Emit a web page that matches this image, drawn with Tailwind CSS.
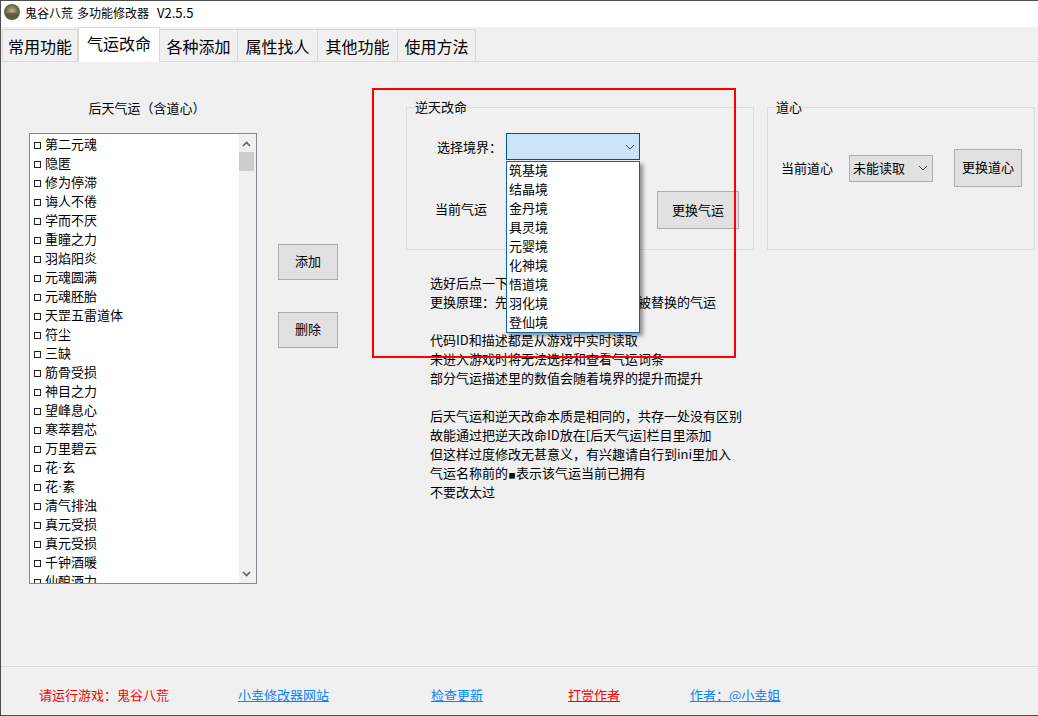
<!DOCTYPE html>
<html lang="zh-CN">
<head>
  <meta charset="UTF-8" />
  <title>鬼谷八荒 多功能修改器 V2.5.5</title>
  <script src="https://cdn.jsdelivr.net/npm/@tailwindcss/browser@4"></script>
</head>
<body class="bg-[#f0f0f0] text-black overflow-hidden">
  <div class="relative w-[1038px] h-[716px] flex flex-col border-l border-t border-b border-[#4d4d4d] bg-[#f0f0f0] text-[13px] leading-[19px] font-['Noto_Sans_CJK_SC',sans-serif]">

    <!-- 标题栏 -->
    <div class="h-[26px] bg-white flex items-center pl-[3px] shrink-0">
      <svg width="16" height="16" viewBox="0 0 16 16" class="mt-[-4px]">
        <defs>
          <radialGradient id="orb" cx="50%" cy="45%" r="55%">
            <stop offset="0%" stop-color="#c9b98f" />
            <stop offset="55%" stop-color="#7d7754" />
            <stop offset="100%" stop-color="#3f5a4c" />
          </radialGradient>
        </defs>
        <circle cx="8" cy="8" r="8" fill="url(#orb)" />
        <path d="M2 10 C5 8 10 8 14 10 L13 12 C10 14 5 14 3 12 Z" fill="#4a4630" opacity="0.6" />
      </svg>
      <span class="ml-[5px] text-[12px] mt-[-4px]">鬼谷八荒</span>
      <span class="ml-[4px] text-[12px] mt-[-4px]">多功能修改器</span>
      <span class="ml-[8px] text-[13px] mt-[-4px]">V2.5.5</span>
    </div>

    <!-- 选项卡 -->
    <div class="h-[35px] shrink-0 flex items-end pl-[1px] border-b border-[#d9d9d9] text-[16px]">
      <div class="w-[76px] h-[33px] -mb-px border border-[#d9d9d9] flex items-center justify-center pt-[2px]">常用功能</div>
      <div class="w-[82px] h-[35px] -mb-px bg-white border-x border-t border-[#d9d9d9] flex items-center justify-center pb-[4px]">气运改命</div>
      <div class="w-[78px] h-[33px] -mb-px border border-l-0 border-[#d9d9d9] flex items-center justify-center pt-[2px]">各种添加</div>
      <div class="w-[80px] h-[33px] -mb-px border border-l-0 border-[#d9d9d9] flex items-center justify-center pt-[2px]">属性找人</div>
      <div class="w-[80px] h-[33px] -mb-px border border-l-0 border-[#d9d9d9] flex items-center justify-center pt-[2px]">其他功能</div>
      <div class="w-[78px] h-[33px] -mb-px border border-l-0 border-[#d9d9d9] flex items-center justify-center pt-[2px]">使用方法</div>
    </div>

    <!-- 主体 -->
    <div class="flex-1 flex pl-[28px] min-h-0">
      <!-- 后天气运列表 -->
      <div class="w-[228px] shrink-0 pt-[36px]">
        <div class="text-center pl-[8px]">后天气运（含道心）</div>
        <div class="relative mt-[16px] h-[451px] border border-[#828790] bg-white flex overflow-hidden">
          <ul class="flex-1 pl-[4px]">
            <li class="h-[19px] flex items-center"><span class="w-[7px] h-[7px] border border-[#222] mr-[4px] mt-[4px]"></span>第二元魂</li>
            <li class="h-[19px] flex items-center"><span class="w-[7px] h-[7px] border border-[#222] mr-[4px] mt-[4px]"></span>隐匿</li>
            <li class="h-[19px] flex items-center"><span class="w-[7px] h-[7px] border border-[#222] mr-[4px] mt-[4px]"></span>修为停滞</li>
            <li class="h-[19px] flex items-center"><span class="w-[7px] h-[7px] border border-[#222] mr-[4px] mt-[4px]"></span>诲人不倦</li>
            <li class="h-[19px] flex items-center"><span class="w-[7px] h-[7px] border border-[#222] mr-[4px] mt-[4px]"></span>学而不厌</li>
            <li class="h-[19px] flex items-center"><span class="w-[7px] h-[7px] border border-[#222] mr-[4px] mt-[4px]"></span>重瞳之力</li>
            <li class="h-[19px] flex items-center"><span class="w-[7px] h-[7px] border border-[#222] mr-[4px] mt-[4px]"></span>羽焰阳炎</li>
            <li class="h-[19px] flex items-center"><span class="w-[7px] h-[7px] border border-[#222] mr-[4px] mt-[4px]"></span>元魂圆满</li>
            <li class="h-[19px] flex items-center"><span class="w-[7px] h-[7px] border border-[#222] mr-[4px] mt-[4px]"></span>元魂胚胎</li>
            <li class="h-[19px] flex items-center"><span class="w-[7px] h-[7px] border border-[#222] mr-[4px] mt-[4px]"></span>天罡五雷道体</li>
            <li class="h-[19px] flex items-center"><span class="w-[7px] h-[7px] border border-[#222] mr-[4px] mt-[4px]"></span>符尘</li>
            <li class="h-[19px] flex items-center"><span class="w-[7px] h-[7px] border border-[#222] mr-[4px] mt-[4px]"></span>三缺</li>
            <li class="h-[19px] flex items-center"><span class="w-[7px] h-[7px] border border-[#222] mr-[4px] mt-[4px]"></span>筋骨受损</li>
            <li class="h-[19px] flex items-center"><span class="w-[7px] h-[7px] border border-[#222] mr-[4px] mt-[4px]"></span>神目之力</li>
            <li class="h-[19px] flex items-center"><span class="w-[7px] h-[7px] border border-[#222] mr-[4px] mt-[4px]"></span>望峰息心</li>
            <li class="h-[19px] flex items-center"><span class="w-[7px] h-[7px] border border-[#222] mr-[4px] mt-[4px]"></span>寒萃碧芯</li>
            <li class="h-[19px] flex items-center"><span class="w-[7px] h-[7px] border border-[#222] mr-[4px] mt-[4px]"></span>万里碧云</li>
            <li class="h-[19px] flex items-center"><span class="w-[7px] h-[7px] border border-[#222] mr-[4px] mt-[4px]"></span>花<span class="font-['Liberation_Sans',sans-serif]">·</span>玄</li>
            <li class="h-[19px] flex items-center"><span class="w-[7px] h-[7px] border border-[#222] mr-[4px] mt-[4px]"></span>花<span class="font-['Liberation_Sans',sans-serif]">·</span>素</li>
            <li class="h-[19px] flex items-center"><span class="w-[7px] h-[7px] border border-[#222] mr-[4px] mt-[4px]"></span>清气排浊</li>
            <li class="h-[19px] flex items-center"><span class="w-[7px] h-[7px] border border-[#222] mr-[4px] mt-[4px]"></span>真元受损</li>
            <li class="h-[19px] flex items-center"><span class="w-[7px] h-[7px] border border-[#222] mr-[4px] mt-[4px]"></span>真元受损</li>
            <li class="h-[19px] flex items-center"><span class="w-[7px] h-[7px] border border-[#222] mr-[4px] mt-[4px]"></span>千钟酒暖</li>
            <li class="h-[19px] flex items-center"><span class="w-[7px] h-[7px] border border-[#222] mr-[4px] mt-[4px]"></span>仙酿酒力</li>
          </ul>
          <!-- 滚动条 -->
          <div class="w-[17px] shrink-0 bg-[#f0f0f0] flex flex-col pr-[2px]">
            <div class="h-[18px] flex items-center justify-center pt-[2px]">
              <svg width="9" height="6" viewBox="0 0 9 6"><path d="M1 5 L4.5 1.5 L8 5" fill="none" stroke="#606060" stroke-width="1.6" /></svg>
            </div>
            <div class="h-[19px] bg-[#cdcdcd]"></div>
            <div class="flex-1"></div>
            <div class="h-[18px] flex items-center justify-center">
              <svg width="9" height="6" viewBox="0 0 9 6"><path d="M1 1 L4.5 4.5 L8 1" fill="none" stroke="#606060" stroke-width="1.6" /></svg>
            </div>
          </div>
        </div>
      </div>

      <!-- 添加/删除 -->
      <div class="w-[60px] ml-[21px] shrink-0 pt-[182px] flex flex-col gap-[32px]">
        <button class="h-[36px] pb-[4px] bg-[#e1e1e1] border border-[#adadad]">添加</button>
        <button class="h-[36px] pb-[4px] bg-[#e1e1e1] border border-[#adadad]">删除</button>
      </div>

      <!-- 右侧 -->
      <div class="ml-[68px] pt-[45px]">
        <div class="flex gap-[13px]">
          <!-- 逆天改命 -->
          <div class="relative w-[348px] h-[143px] border border-[#dcdcdc] pt-[25px] pl-[30px] pr-[14px]">
            <span class="absolute left-[8px] top-[-11px] bg-[#f0f0f0]">逆天改命</span>
            <div class="flex items-center h-[27px]">
              <span class="w-[69px]">选择境界：</span>
              <div class="relative w-[134px] h-[27px]">
                <div class="h-full bg-[#cce4f7] border border-[#005499] flex items-center justify-end pr-[4px]">
                  <svg width="10" height="6" viewBox="0 0 10 6"><path d="M1 1 L5 5 L9 1" fill="none" stroke="#444" stroke-width="1" /></svg>
                </div>
                <ul class="absolute z-10 left-0 top-[28px] w-[134px] h-[172px] overflow-hidden bg-white border border-[#0a64b4] pl-[2px] shadow-[3px_3px_4px_rgba(0,0,0,0.4)] leading-[15px]">
                  <li class="h-[19px]">筑基境</li>
                  <li class="h-[19px]">结晶境</li>
                  <li class="h-[19px]">金丹境</li>
                  <li class="h-[19px]">具灵境</li>
                  <li class="h-[19px]">元婴境</li>
                  <li class="h-[19px]">化神境</li>
                  <li class="h-[19px]">悟道境</li>
                  <li class="h-[19px]">羽化境</li>
                  <li class="h-[19px]">登仙境</li>
                </ul>
              </div>
            </div>
            <div class="flex items-center mt-[31px] ml-[-2px] h-[38px]">
              <span class="mb-[4px]">当前气运</span>
              <button class="ml-auto w-[82px] h-[38px] pb-[2px] bg-[#e1e1e1] border border-[#adadad]">更换气运</button>
            </div>
          </div>

          <!-- 道心 -->
          <div class="relative w-[268px] h-[143px] border border-[#dcdcdc] pl-[13px] pt-[41px]">
            <span class="absolute left-[8px] top-[-11px] bg-[#f0f0f0]">道心</span>
            <div class="flex items-center h-[38px]">
              <span class="w-[68px] mb-[2px]">当前道心</span>
              <div class="w-[84px] h-[27px] bg-[#e1e1e1] border border-[#adadad] flex items-center justify-between pl-[3px] pr-[4px]">
                <span class="mb-[2px]">未能读取</span>
                <svg width="10" height="6" viewBox="0 0 10 6"><path d="M1 1 L5 5 L9 1" fill="none" stroke="#444" stroke-width="1" /></svg>
              </div>
              <button class="ml-[21px] w-[68px] h-[38px] pb-[4px] bg-[#e1e1e1] border border-[#adadad]">更换道心</button>
            </div>
          </div>
        </div>

        <!-- 说明 -->
        <div class="mt-[23px] ml-[24px]">
          <p>选好后点一下读取再更换</p>
          <p>更换原理：先添加新的气运然后删除被替换的气运</p>
          <p class="h-[19px]"></p>
          <p>代码ID和描述都是从游戏中实时读取</p>
          <p>未进入游戏时将无法选择和查看气运词条</p>
          <p>部分气运描述里的数值会随着境界的提升而提升</p>
          <p class="h-[19px]"></p>
          <p>后天气运和逆天改命本质是相同的，共存一处没有区别</p>
          <p>故能通过把逆天改命ID放在[后天气运]栏目里添加</p>
          <p>但这样过度修改无甚意义，有兴趣请自行到ini里加入</p>
          <p>气运名称前的<span class="inline-block w-[8px] text-center text-[7px] leading-[7px]">■</span>表示该气运当前已拥有</p>
          <p>不要改太过</p>
        </div>
      </div>
    </div>

    <!-- 底栏 -->
    <div class="h-[49px] shrink-0 border-t border-[#d9d9d9] flex items-center pt-[7px] pl-[38px]">
      <span class="w-[199px] text-[#ff0000]">请运行游戏：鬼谷八荒</span>
      <a class="w-[193px] text-[#0a84ff] underline">小幸修改器网站</a>
      <a class="w-[137px] text-[#0a84ff] underline">检查更新</a>
      <a class="w-[122px] text-[#ff0000] underline">打赏作者</a>
      <a class="text-[#0a84ff] underline">作者：@小幸姐</a>
    </div>

    <!-- 红框标注 -->
    <div class="absolute z-20 left-[371px] top-[87px] w-[364px] h-[270px] border-2 border-[#ff0000] pointer-events-none"></div>
  </div>
</body>
</html>
